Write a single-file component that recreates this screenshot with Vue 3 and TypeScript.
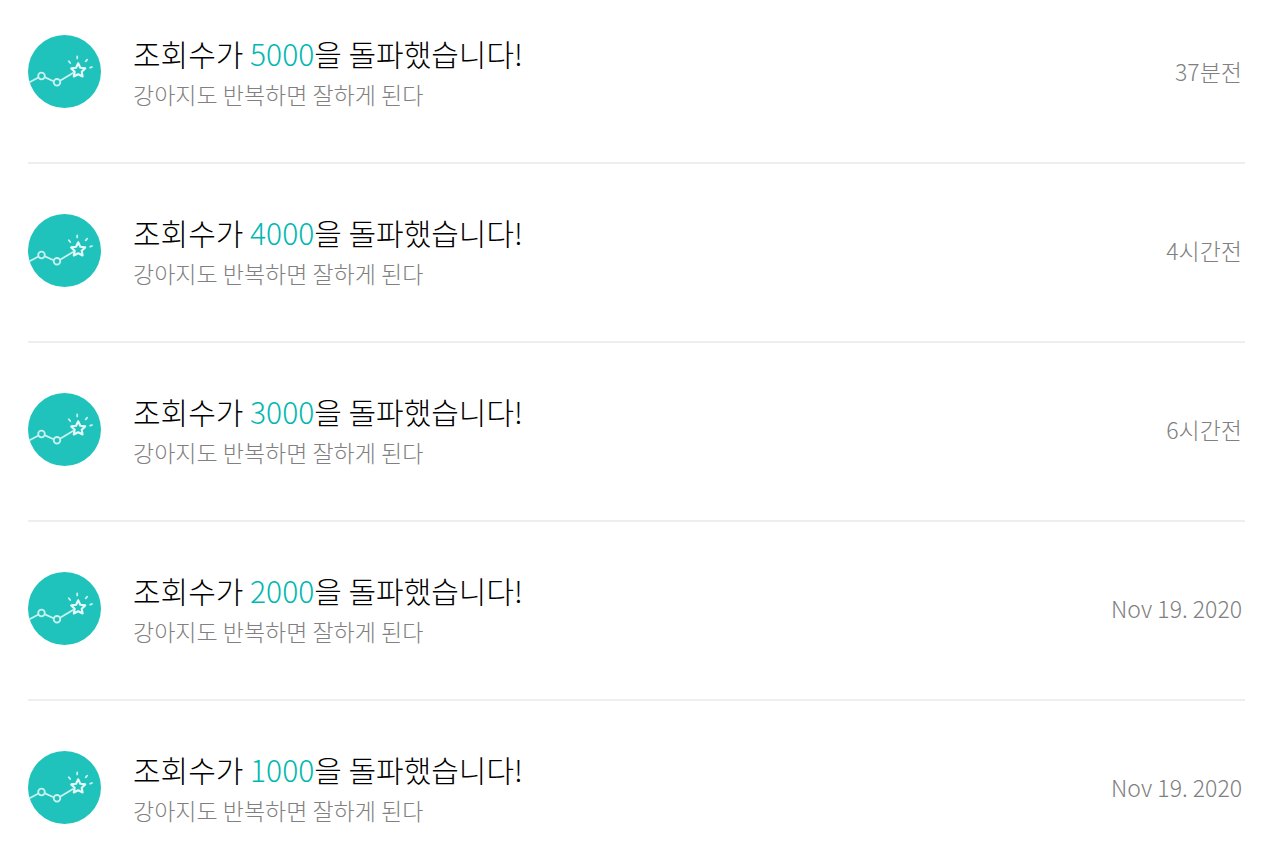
<script setup lang="ts">
interface Notice {
  views: number
  post: string
  time: string
}

const post = '강아지도 반복하면 잘하게 된다'

const notices: Notice[] = [
  { views: 5000, post, time: '37분전' },
  { views: 4000, post, time: '4시간전' },
  { views: 3000, post, time: '6시간전' },
  { views: 2000, post, time: 'Nov 19. 2020' },
  { views: 1000, post, time: 'Nov 19. 2020' },
]
</script>

<template>
  <ul class="notices">
    <li v-for="notice in notices" :key="notice.views" class="notice">
      <svg class="badge" viewBox="0 0 73 73" aria-hidden="true">
        <circle cx="36.500" cy="36.500" r="36.500" fill="#20c3bc" />
        <g fill="none" stroke="#c8f1ef" stroke-width="1.800" stroke-linecap="round" stroke-linejoin="round">
          <path d="M1.500 47.200 L10 42.800 M17 42.400 L25.600 46.200 M32.400 45.600 L45 38" />
          <circle cx="13.500" cy="41" r="3.300" />
          <circle cx="29" cy="47.300" r="3.300" />
          <path
            stroke="#e6faf9"
            stroke-width="2.100"
            d="M50.200 28.300 L52.300 32.800 L57.200 33.400 L53.700 36.800 L54.600 41.500 L50.200 39.200 L45.800 41.500 L46.700 36.800 L43.200 33.400 L48.100 32.800 Z"
          />
          <path d="M49.200 21.500 V23.400 M40.800 26.300 L42.200 28 M59.200 24.600 L57.700 26.300 M62.200 32.700 L64 32" />
        </g>
      </svg>
      <div class="body">
        <p class="title">조회수가 <span class="count">{{ notice.views }}</span>을 돌파했습니다!</p>
        <p class="post">{{ notice.post }}</p>
      </div>
      <time class="time">{{ notice.time }}</time>
    </li>
  </ul>
</template>

<style>
body {
  margin: 0;
  background: #fff;
}
</style>

<style scoped>
.notices {
  margin: 0;
  padding: 28px 35px 0 28px;
  list-style: none;
  font-family: 'Noto Sans CJK KR', sans-serif;
  font-weight: 300;
}

.notice {
  display: flex;
  align-items: center;
  padding: 43px 3px 47px 0;
  border-bottom: 2px solid #eeeeee;
}

.notice:first-child {
  padding-top: 0;
}

.notice:last-child {
  padding-bottom: 0;
  border-bottom: 0;
}

.badge {
  flex: none;
  width: 73px;
  height: 73px;
  margin-right: 32px;
}

.body {
  flex: 1;
  min-width: 0;
  padding-top: 5px;
}

.title,
.post {
  margin: 0;
  line-height: 41px;
}

.title {
  font-size: 30px;
  color: #000;
}

.count {
  color: #00b8b0;
}

.post {
  font-size: 23px;
  color: #808080;
}

.time {
  flex: none;
  font-size: 23px;
  line-height: 41px;
  color: #808080;
}
</style>
